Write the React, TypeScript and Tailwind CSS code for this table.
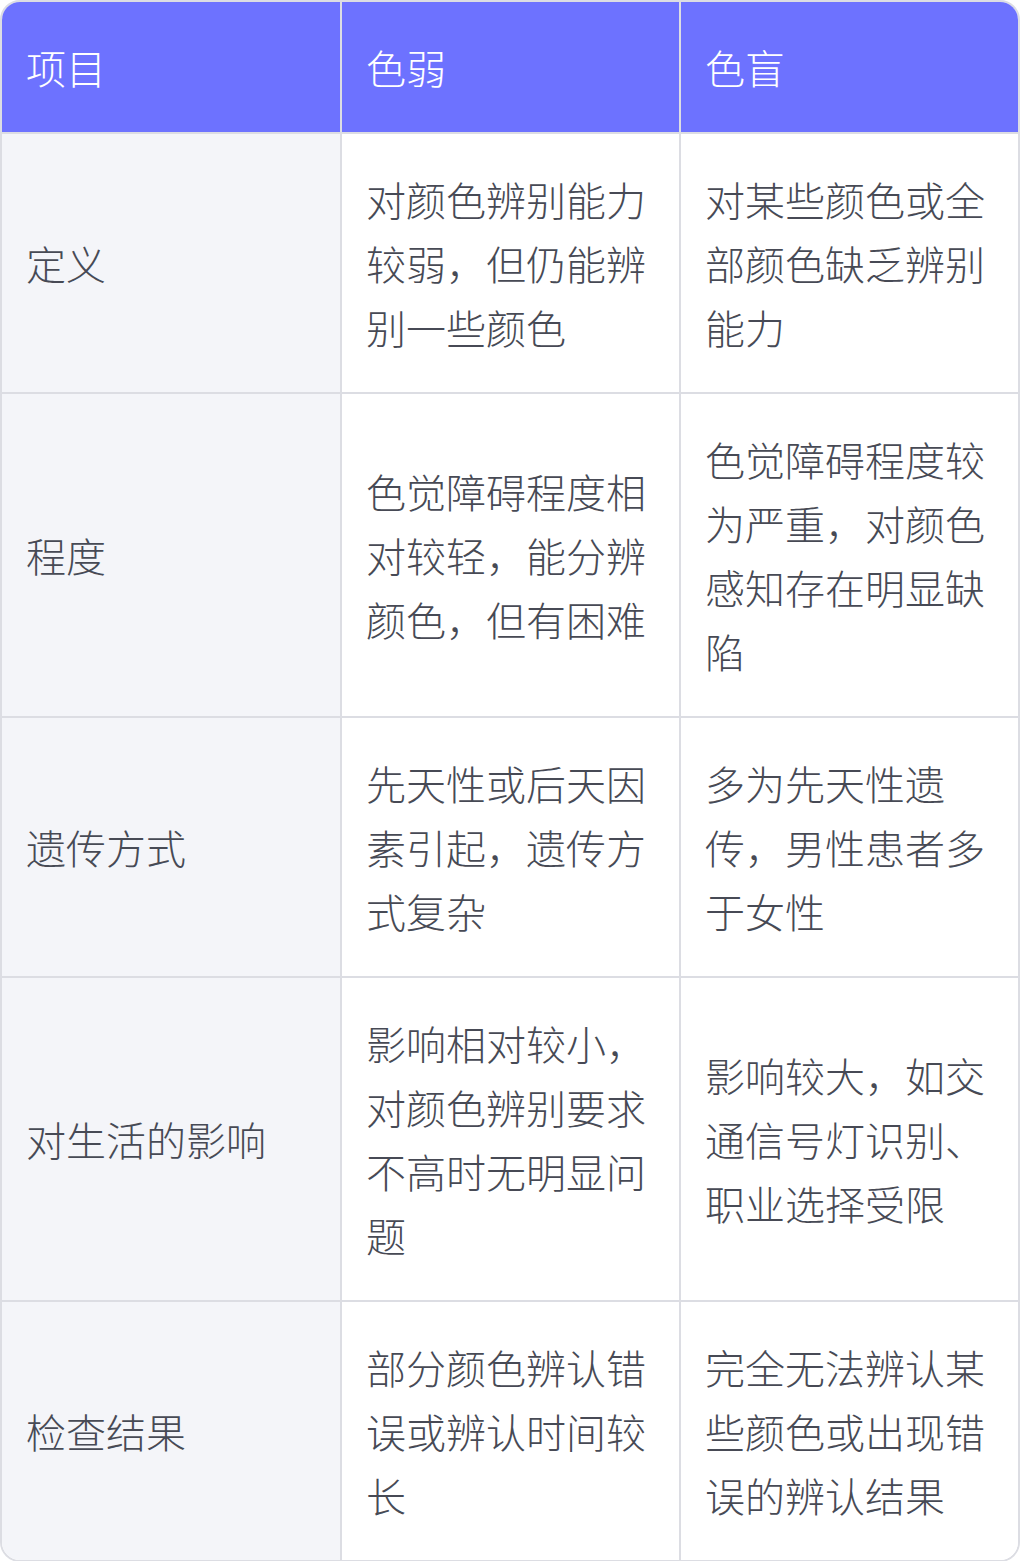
import React from "react";

const header = ["项目", "色弱", "色盲"];
const rows: [string, string, string][] = [
  ["定义", "对颜色辨别能力较弱，但仍能辨别一些颜色", "对某些颜色或全部颜色缺乏辨别能力"],
  ["程度", "色觉障碍程度相对较轻，能分辨颜色，但有困难", "色觉障碍程度较为严重，对颜色感知存在明显缺陷"],
  ["遗传方式", "先天性或后天因素引起，遗传方式复杂", "多为先天性遗传，男性患者多于女性"],
  ["对生活的影响", "影响相对较小，对颜色辨别要求不高时无明显问题", "影响较大，如交通信号灯识别、职业选择受限"],
  ["检查结果", "部分颜色辨认错误或辨认时间较长", "完全无法辨认某些颜色或出现错误的辨认结果"],
];

export default function App() {
  return (
    <div
      className="w-[1020px] h-[1561px] bg-white"
      style={{ fontFamily: '"Noto Sans CJK SC", "Noto Sans", sans-serif' }}
    >
      <div className="w-[1020px] border-2 border-[#dcdde3] rounded-[20px] overflow-hidden">
        <div className="grid grid-cols-[340px_339px_337px]">
          {header.map((h, i) => (
            <div
              key={h}
              className={`bg-[#6d72ff] text-white text-[40px] leading-[64px] font-light px-6 py-[33px] border-b-2 border-[#dcdde3] ${
                i < 2 ? "border-r-2" : ""
              }`}
            >
              {h}
            </div>
          ))}
          {rows.map((r, ri) =>
            r.map((c, ci) => (
              <div
                key={`${ri}-${ci}`}
                className={`flex items-center px-6 py-[33px] text-[40px] leading-[64px] font-light text-[#474a55] border-[#dcdde3] ${
                  ci === 0 ? "bg-[#f4f5f9]" : "bg-white"
                } ${ci < 2 ? "border-r-2" : ""} ${ri < rows.length - 1 ? "border-b-2" : ""}`}
              >
                <span>{c}</span>
              </div>
            ))
          )}
        </div>
      </div>
    </div>
  );
}
